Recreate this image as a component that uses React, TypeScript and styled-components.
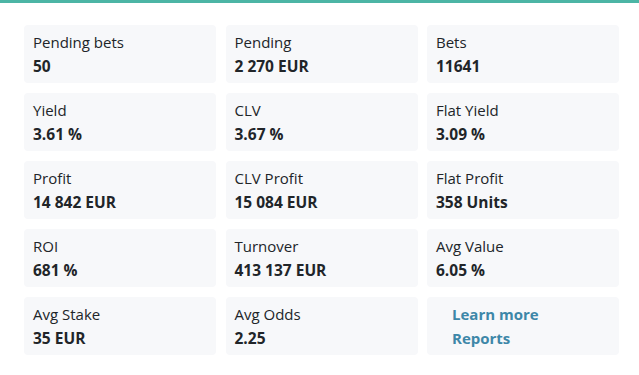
import styled, { createGlobalStyle } from 'styled-components';

const GlobalStyle = createGlobalStyle`
  body {
    margin: 0;
    background: #ffffff;
    font-family: "Open Sans", "Noto Sans", sans-serif;
    color: #212529;
  }
`;

const Page = styled.div`
  width: 639px;
  min-height: 375px;
  border-top: 3px solid #4cb5a5;
  box-sizing: border-box;
`;

const Grid = styled.div`
  display: grid;
  grid-template-columns: 192px 192px 192px;
  column-gap: 9.5px;
  row-gap: 10px;
  padding: 22px 20px 0 24px;
`;

const Card = styled.div`
  background: #f7f8fa;
  border-radius: 4px;
  height: 58px;
  box-sizing: border-box;
  padding: 5px 9px 5px;
  display: flex;
  flex-direction: column;
`;

const Label = styled.div`
  font-size: 15px;
  line-height: 24px;
  color: #212529;
`;

const Value = styled.div`
  font-size: 15.5px;
  font-weight: 700;
  line-height: 24px;
  color: #212529;
`;

const LinkList = styled.div`
  display: flex;
  flex-direction: column;
  padding-left: 16px;
`;

const Link = styled.a`
  font-size: 15px;
  font-weight: 700;
  line-height: 24px;
  color: #3d87a8;
  text-decoration: none;
`;

const stats = [
  ['Pending bets', '50'],
  ['Pending', '2 270 EUR'],
  ['Bets', '11641'],
  ['Yield', '3.61 %'],
  ['CLV', '3.67 %'],
  ['Flat Yield', '3.09 %'],
  ['Profit', '14 842 EUR'],
  ['CLV Profit', '15 084 EUR'],
  ['Flat Profit', '358 Units'],
  ['ROI', '681 %'],
  ['Turnover', '413 137 EUR'],
  ['Avg Value', '6.05 %'],
  ['Avg Stake', '35 EUR'],
  ['Avg Odds', '2.25'],
];

export default function App() {
  return (
    <Page>
      <GlobalStyle />
      <Grid>
        {stats.map(([label, value]) => (
          <Card key={label}>
            <Label>{label}</Label>
            <Value>{value}</Value>
          </Card>
        ))}
        <Card>
          <LinkList>
            <Link href="#">Learn more</Link>
            <Link href="#">Reports</Link>
          </LinkList>
        </Card>
      </Grid>
    </Page>
  );
}
